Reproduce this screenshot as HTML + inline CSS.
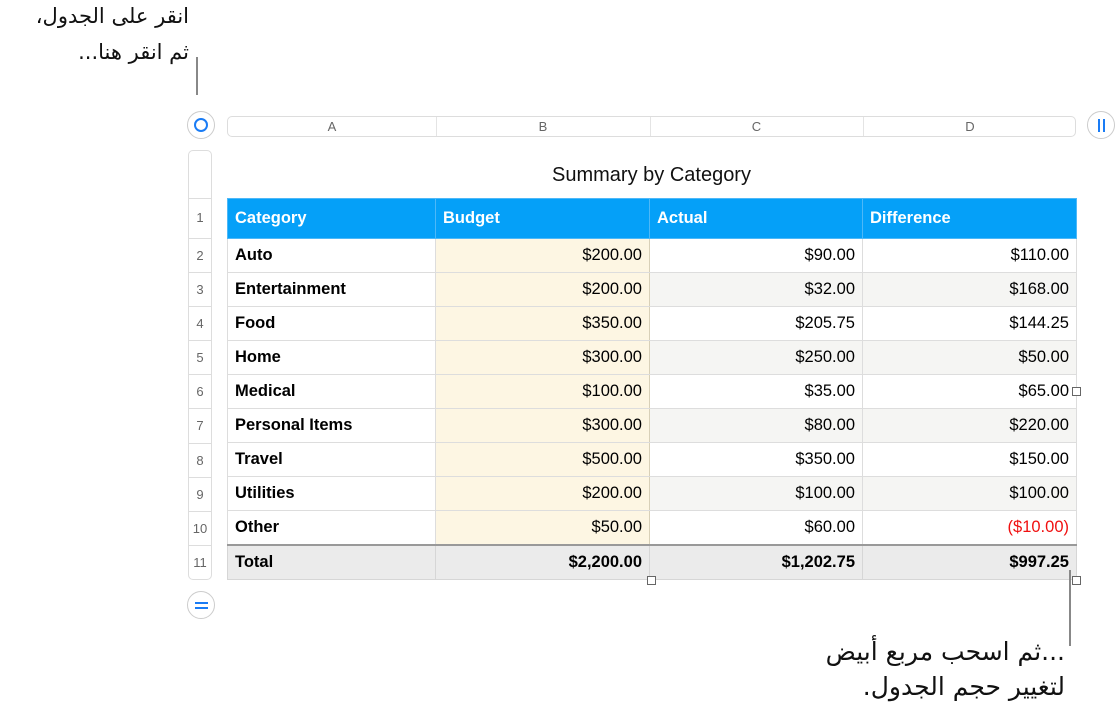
<!DOCTYPE html>
<html><head><meta charset="utf-8"><style>
body{margin:0;width:1117px;height:716px;background:#fff;position:relative;overflow:hidden;font-family:"Liberation Sans",Arial,sans-serif}
.a{position:absolute}
.ar{position:absolute;font-family:"DejaVu Sans","Noto Sans CJK SC",sans-serif;font-size:21px;color:#111;direction:rtl;white-space:nowrap;text-align:right}
table{position:absolute;left:227px;top:198px;border-collapse:collapse;font-size:16.5px;table-layout:fixed}
td{height:33px;border:1px solid #ddd;padding:0 7px;color:#000;white-space:nowrap}
tr.h td{background:#05a0f8;color:#fff;font-weight:bold;height:38px;border-color:#4db8f8;padding-bottom:1px}
td.b{background:#fdf6e3;border-right:1px solid #d8d0b8}
td.l{font-weight:bold}
td.n{text-align:right}
tr.s td.c{background:#f5f5f3}
tr.t td{background:#ebebeb;font-weight:bold;border-color:#d6d6d6}
tr.t td{border-top:2px solid #999}
.rn{position:absolute;left:188px;width:24px;text-align:center;font-size:13px;color:#666}
.hdl{position:absolute;width:7px;height:7px;border:1px solid #666;background:#fff}
</style></head><body>
<div class="ar" style="right:928px;top:4px;font-size:21px">انقر على الجدول،</div>
<div class="ar" style="right:928px;top:40px;font-size:21px">ثم انقر هنا...</div>
<div class="a" style="left:196px;top:57px;width:2px;height:38px;background:#888"></div>

<div class="a" style="left:187px;top:111px;width:28px;height:28px;border:1px solid #ccc;border-radius:50%;box-sizing:border-box"></div>
<div class="a" style="left:194px;top:118px;width:14px;height:14px;border:2px solid #1a7cf5;border-radius:50%;box-sizing:border-box"></div>
<div class="a" style="left:1087px;top:111px;width:28px;height:28px;border:1px solid #ccc;border-radius:50%;box-sizing:border-box"></div>
<div class="a" style="left:1098px;top:119px;width:2px;height:13px;background:#1a7cf5"></div>
<div class="a" style="left:1103px;top:119px;width:2px;height:13px;background:#1a7cf5"></div>
<div class="a" style="left:187px;top:591px;width:28px;height:28px;border:1px solid #ccc;border-radius:50%;box-sizing:border-box"></div>
<div class="a" style="left:195px;top:602px;width:13px;height:2px;background:#1a7cf5"></div>
<div class="a" style="left:195px;top:607px;width:13px;height:2px;background:#1a7cf5"></div>

<div class="a" style="left:227px;top:116px;width:849px;height:21px;border:1px solid #ddd;border-radius:5px;box-sizing:border-box;font-size:13px;color:#666">
<span class="a" style="left:0;width:208px;text-align:center;top:2px">A</span>
<span class="a" style="left:208px;top:0;width:1px;height:19px;background:#e4e4e4"></span>
<span class="a" style="left:208px;width:214px;text-align:center;top:2px">B</span>
<span class="a" style="left:422px;top:0;width:1px;height:19px;background:#e4e4e4"></span>
<span class="a" style="left:422px;width:213px;text-align:center;top:2px">C</span>
<span class="a" style="left:635px;top:0;width:1px;height:19px;background:#e4e4e4"></span>
<span class="a" style="left:635px;width:214px;text-align:center;top:2px">D</span>
</div>

<div class="a" style="left:188px;top:150px;width:24px;height:430px;border:1px solid #ddd;border-radius:5px;box-sizing:border-box"></div>
<div class="a" style="left:188px;top:198px;width:24px;height:1px;background:#ddd"></div>
<div class="rn" style="top:210px">1</div>
<div class="a" style="left:188px;top:238px;width:24px;height:1px;background:#ddd"></div>
<div class="rn" style="top:248px">2</div><div class="a" style="left:188px;top:272px;width:24px;height:1px;background:#ddd"></div>
<div class="rn" style="top:282px">3</div><div class="a" style="left:188px;top:306px;width:24px;height:1px;background:#ddd"></div>
<div class="rn" style="top:316px">4</div><div class="a" style="left:188px;top:340px;width:24px;height:1px;background:#ddd"></div>
<div class="rn" style="top:350px">5</div><div class="a" style="left:188px;top:374px;width:24px;height:1px;background:#ddd"></div>
<div class="rn" style="top:384px">6</div><div class="a" style="left:188px;top:408px;width:24px;height:1px;background:#ddd"></div>
<div class="rn" style="top:418px">7</div><div class="a" style="left:188px;top:443px;width:24px;height:1px;background:#ddd"></div>
<div class="rn" style="top:453px">8</div><div class="a" style="left:188px;top:477px;width:24px;height:1px;background:#ddd"></div>
<div class="rn" style="top:487px">9</div><div class="a" style="left:188px;top:511px;width:24px;height:1px;background:#ddd"></div>
<div class="rn" style="top:521px">10</div><div class="a" style="left:188px;top:545px;width:24px;height:1px;background:#ddd"></div>
<div class="rn" style="top:555px">11</div>

<div class="a" style="left:227px;width:849px;top:164px;text-align:center;font-size:20px;color:#111">Summary by Category</div>

<table>
<colgroup><col style="width:208px"><col style="width:214px"><col style="width:213px"><col style="width:214px"></colgroup>
<tr class="h"><td>Category</td><td>Budget</td><td>Actual</td><td>Difference</td></tr>
<tr><td class="l">Auto</td><td class="b n">$200.00</td><td class="c n">$90.00</td><td class="c n">$110.00</td></tr>
<tr class="s"><td class="l">Entertainment</td><td class="b n">$200.00</td><td class="c n">$32.00</td><td class="c n">$168.00</td></tr>
<tr><td class="l">Food</td><td class="b n">$350.00</td><td class="c n">$205.75</td><td class="c n">$144.25</td></tr>
<tr class="s"><td class="l">Home</td><td class="b n">$300.00</td><td class="c n">$250.00</td><td class="c n">$50.00</td></tr>
<tr><td class="l">Medical</td><td class="b n">$100.00</td><td class="c n">$35.00</td><td class="c n">$65.00</td></tr>
<tr class="s"><td class="l">Personal Items</td><td class="b n">$300.00</td><td class="c n">$80.00</td><td class="c n">$220.00</td></tr>
<tr><td class="l">Travel</td><td class="b n">$500.00</td><td class="c n">$350.00</td><td class="c n">$150.00</td></tr>
<tr class="s"><td class="l">Utilities</td><td class="b n">$200.00</td><td class="c n">$100.00</td><td class="c n">$100.00</td></tr>
<tr><td class="l">Other</td><td class="b n">$50.00</td><td class="c n">$60.00</td><td class="c n" style="color:#f01010">($10.00)</td></tr>
<tr class="t"><td>Total</td><td class="n">$2,200.00</td><td class="n">$1,202.75</td><td class="n">$997.25</td></tr>
</table>

<div class="hdl" style="left:647px;top:576px"></div>
<div class="hdl" style="left:1072px;top:576px"></div>
<div class="hdl" style="left:1072px;top:387px"></div>
<div class="a" style="left:1069px;top:570px;width:2px;height:76px;background:#888"></div>
<div class="ar" style="right:52px;top:637px;font-size:25px">...ثم اسحب مربع أبيض</div>
<div class="ar" style="right:52px;top:672px;font-size:25px">لتغيير حجم الجدول.</div>
</body></html>
